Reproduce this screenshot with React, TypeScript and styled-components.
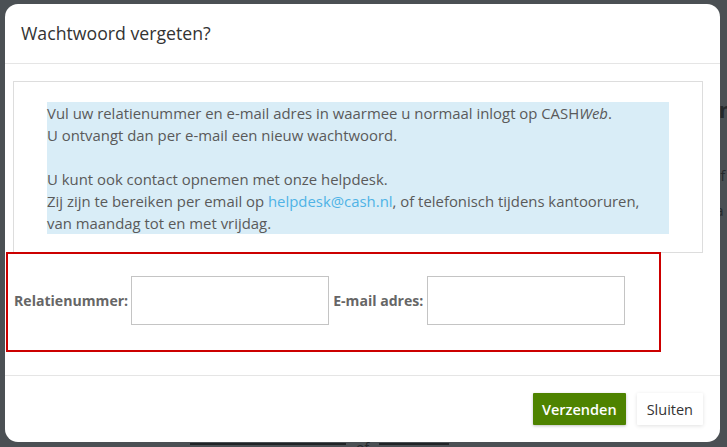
import React from "react";
import styled, { createGlobalStyle } from "styled-components";

const GlobalStyle = createGlobalStyle`
  html, body {
    margin: 0;
    padding: 0;
    background: #4b5054;
    width: 727px;
    height: 447px;
    overflow: hidden;
  }
  * { box-sizing: border-box; }
  body {
    font-family: "Open Sans", "Noto Sans", sans-serif;
  }
`;

const Screen = styled.div`
  position: relative;
  width: 727px;
  height: 447px;
  overflow: hidden;
  background: #4b5054;
`;

const BackPage = styled.div`
  position: absolute;
  left: 712px;
  top: 92px;
  width: 60px;
  color: #25292c;
  font-family: "Open Sans", sans-serif;
  font-size: 14px;
  line-height: 17.5px;
`;

const BackHeading = styled.div`
  font-size: 22px;
  font-weight: 700;
  line-height: 34px;
  margin-bottom: 6px;
`;

const BackBottom = styled.div`
  position: absolute;
  left: 190px;
  top: 443px;
  display: flex;
  gap: 10px;
  align-items: flex-start;
`;

const BackField = styled.div<{ $w: number }>`
  width: ${(p) => p.$w}px;
  height: 10px;
  border-top: 2px solid #202326;
`;

const BackWord = styled.span`
  color: #25292c;
  font-size: 14px;
  line-height: 10px;
`;

const Modal = styled.div`
  position: absolute;
  left: 5px;
  top: 4px;
  width: 715px;
  height: 438px;
  background: #fff;
  border-radius: 13px;
  display: flex;
  flex-direction: column;
  overflow: hidden;
  color: #555;
`;

const Header = styled.div`
  height: 60px;
  border-bottom: 1px solid #e5e5e5;
  padding: 0 16px;
  display: flex;
  align-items: center;
`;

const Title = styled.h4`
  margin: 0;
  font-size: 17.7px;
  font-weight: 500;
  color: #333;
  padding-bottom: 2px;
`;

const Body = styled.div`
  flex: 1;
  padding-top: 17px;
  border-bottom: 1px solid #e5e5e5;
`;

const InfoPanel = styled.div`
  margin: 0 17px 0 8px;
  height: 172px;
  border: 1px solid #ddd;
  padding: 20px 33px 0 33px;
`;

const InfoText = styled.div`
  background: #d9edf7;
  font-size: 14.9px;
  line-height: 22px;
  color: #5a5a5a;
  height: 132px;
  white-space: nowrap;
`;

const Link = styled.a`
  color: #4fb3e6;
  text-decoration: none;
`;

const FormBox = styled.div`
  margin: -1px 0 0 1px;
  width: 655px;
  height: 100px;
  border: 2px solid #cc0000;
  padding: 22px 0 0 6px;
  display: flex;
  align-items: flex-start;
`;

const FormRow = styled.div`
  display: flex;
  align-items: center;
  height: 49px;
`;

const Label = styled.label`
  font-size: 14.1px;
  font-weight: 700;
  color: #666;
  margin-right: 3px;
`;

const Input = styled.input`
  width: 198px;
  height: 49px;
  border: 1px solid #c4c4c4;
  background: #fff;
  outline: none;
  margin-right: 4px;
  & + label {
    margin-right: 4px;
  }
`;

const Footer = styled.div`
  height: 66px;
  padding: 17px 17px 0 0;
  display: flex;
  justify-content: flex-end;
  align-items: flex-start;
  gap: 11px;
`;

const Button = styled.button<{ $primary?: boolean }>`
  height: 32px;
  padding: 0 ${(p) => (p.$primary ? 9 : 10)}px;
  border: none;
  border-radius: 1px;
  font-family: "Open Sans", sans-serif;
  font-size: 14.5px;
  font-weight: ${(p) => (p.$primary ? 600 : 400)};
  background: ${(p) => (p.$primary ? "#4e8300" : "#fff")};
  color: ${(p) => (p.$primary ? "#fff" : "#333")};
  box-shadow: ${(p) =>
    p.$primary ? "0 1px 3px rgba(0,0,0,0.25)" : "0 1px 4px rgba(0,0,0,0.12)"};
`;

export default function App() {
  return (
    <>
      <GlobalStyle />
      <Screen>
        <BackPage>
          <BackHeading>in</BackHeading>
          <div>e</div>
          <div>n</div>
          <div>nf</div>
          <div>v</div>
          <div>.a</div>
        </BackPage>
        <BackBottom>
          <BackField $w={156} />
          <BackWord>of</BackWord>
          <BackField $w={70} />
        </BackBottom>
        <Modal>
          <Header>
            <Title>Wachtwoord vergeten?</Title>
          </Header>
          <Body>
            <InfoPanel>
              <InfoText>
                Vul uw relatienummer en e-mail adres in waarmee u normaal inlogt op CASH<i>Web</i>.
                <br />
                U ontvangt dan per e-mail een nieuw wachtwoord.
                <br />
                <br />
                U kunt ook contact opnemen met onze helpdesk.
                <br />
                Zij zijn te bereiken per email op <Link href="#">helpdesk@cash.nl</Link>, of telefonisch tijdens kantooruren,
                <br />
                van maandag tot en met vrijdag.
              </InfoText>
            </InfoPanel>
            <FormBox>
              <FormRow>
                <Label>Relatienummer:</Label>
                <Input type="text" />
                <Label>E-mail adres:</Label>
                <Input type="text" />
              </FormRow>
            </FormBox>
          </Body>
          <Footer>
            <Button $primary>Verzenden</Button>
            <Button>Sluiten</Button>
          </Footer>
        </Modal>
      </Screen>
    </>
  );
}
